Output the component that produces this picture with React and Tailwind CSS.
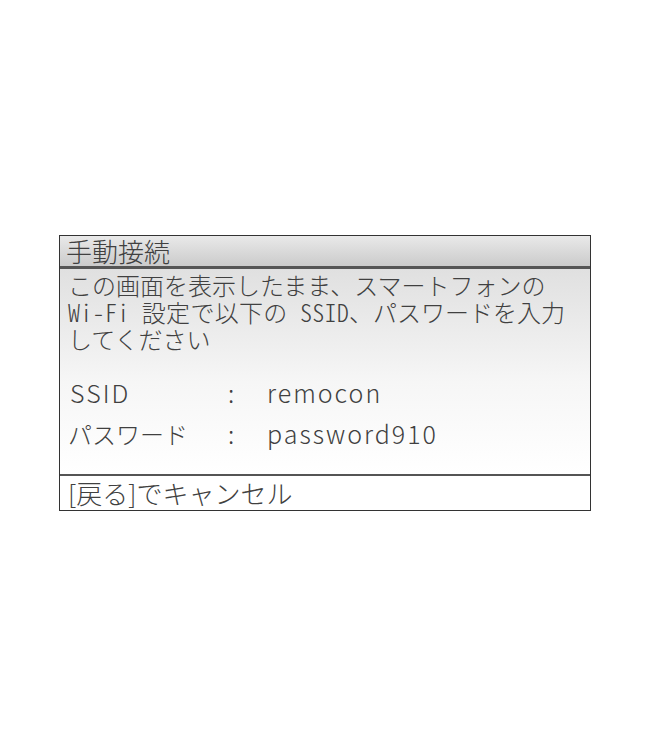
export default function App() {
  const jp = { fontFamily: '"Noto Sans CJK JP", "Noto Sans", sans-serif' };

  return (
    <div className="w-[648px] h-[744px] bg-white pt-[235px] pl-[59px]" style={jp}>
      <div className="w-[532px] border border-[#333] text-[#404040] font-light">
        {/* title bar */}
        <div className="h-[33px] bg-gradient-to-b from-[#e9e9e9] to-[#cbcbcb] border-b-[3px] border-[#555] pl-[6px] text-[26px] leading-[30px]">
          手動接続
        </div>

        {/* body */}
        <div className="h-[205px] bg-gradient-to-b from-[#e0e0e0] via-[#f6f6f6] via-55% to-white pl-[8px]">
          <p className="pt-[2px] text-[24px] leading-[27px]">
            この画面を表示したまま、スマートフォンの
            <br />
            <span className="[font-feature-settings:'hwid'] tracking-[0.3px]">Wi-Fi 設定で以下の SSID</span>、パスワードを入力
            <br />
            してください
          </p>
          <div className="mt-[20px] grid grid-cols-[160px_39px_1fr] text-[25px] leading-[41px]">
            <span className="pl-[2px] tracking-[2px]">SSID</span>
            <span>:</span>
            <span className="tracking-[2px]">remocon</span>
            <span className="text-[24px]">パスワード</span>
            <span>:</span>
            <span className="tracking-[2px]">password910</span>
          </div>
        </div>

        {/* footer */}
        <div className="h-[36px] border-t-2 border-[#555] bg-white pl-[8px] text-[26px] leading-[33px]">
          [戻る]でキャンセル
        </div>
      </div>
    </div>
  );
}
